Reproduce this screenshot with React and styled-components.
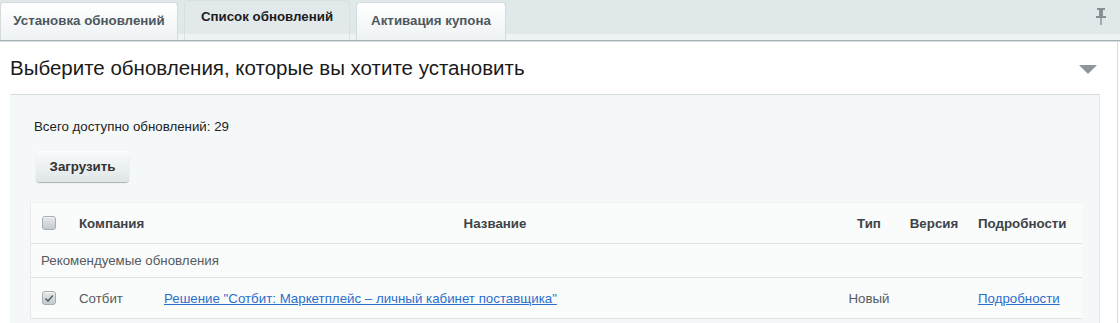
import React from 'react';
import styled, { createGlobalStyle } from 'styled-components';

const Global = createGlobalStyle`
  html, body {
    margin: 0;
    padding: 0;
    background: #fff;
    font-family: "Liberation Sans", Arial, sans-serif;
  }
`

const Page = styled.div`
  width: 1120px;
  height: 323px;
  overflow: hidden;
`

// tabs
const TabBar = styled.div`
  height: 40px;
  display: flex;
  align-items: flex-end;
  gap: 6px;
  padding-right: 14px;
  background: linear-gradient(to bottom, #e0e8ea 0, #e0e8ea 34px, #eef2f3 34px);
  border-bottom: 1px solid #a8b2b5;
  box-shadow: 0 1px 0 #d7dee0;
  box-sizing: content-box;
`
const Tab = styled.div`
  height: ${p => (p.active ? 40 : 38)}px;
  width: ${p => p.w}px;
  box-sizing: border-box;
  display: flex;
  justify-content: center;
  padding-top: ${p => (p.active ? 8 : 10)}px;
  font-size: 13.3px;
  font-weight: bold;
  color: ${p => (p.active ? '#1c1c1c' : '#4b585e')};
  border-radius: 4px 4px 0 0;
  border: 1px solid ${p => (p.active ? '#d8e0e2' : '#d4dbdd')};
  border-bottom: none;
  background: ${p => (p.active
    ? 'linear-gradient(to bottom, #e0e8ea, #e4eaec 85%, #eef2f3 85%)'
    : 'linear-gradient(to bottom, #ffffff, #f1f4f5 85%, #eef2f3)')};
`
const Spacer = styled.div`
  flex: 1;
`
const Pin = styled.svg`
  align-self: flex-start;
  margin-top: 8px;
`

// content
const Content = styled.div`
  width: 1117px;
  border-right: 1px solid #d5dcdd;
  margin-top: 1px;
  height: 300px;
`
const TitleRow = styled.div`
  height: 52px;
  display: flex;
  align-items: center;
  justify-content: space-between;
  padding: 0 20px 0 10px;
`
const Title = styled.h2`
  margin: 0;
  font-weight: normal;
  font-size: 20.5px;
  color: #1a1a1a;
`
const Arrow = styled.div`
  width: 0;
  height: 0;
  border-left: 9px solid transparent;
  border-right: 9px solid transparent;
  border-top: 9px solid #8f9699;
  margin-top: 2px;
`
const Box = styled.div`
  margin-left: 10px;
  width: 1069px;
  background: #f5f8f9;
  border-top: 1px solid #d8dee0;
  border-right: 1px solid #e3e8e9;
  padding: 24px 0 0 20px;
  height: 260px;
`
const Total = styled.div`
  font-size: 13.3px;
  color: #222;
  margin-left: 4px;
`
const Button = styled.button`
  margin: 17px 0 0 6px;
  width: 93px;
  height: 31px;
  border: none;
  border-radius: 4px;
  background: linear-gradient(to bottom, #f9fbfb, #dfe5e7);
  box-shadow: 0 1px 1px rgba(0, 0, 0, 0.3), inset 0 1px 0 #fff;
  font-family: inherit;
  font-size: 13.3px;
  font-weight: bold;
  color: #333;
`

// table
const Table = styled.div`
  margin-top: 20px;
  width: 1051px;
  background: #fafbfb;
  border-left: 1px solid #e6eaeb;
  border-top: 1px solid #eef1f2;
`
const Row = styled.div`
  display: grid;
  grid-template-columns: 37px 85px 684px 64px 66px 116px;
  height: ${p => p.h}px;
  align-items: center;
  border-bottom: 1px solid #dde3e4;
  font-size: 13.3px;
  color: ${p => (p.head ? '#3d4347' : '#555b5f')};
  font-weight: ${p => (p.head ? 'bold' : 'normal')};
`
const Cell = styled.div`
  padding-left: ${p => (p.center ? 0 : 11)}px;
  text-align: ${p => (p.center ? 'center' : 'left')};
  white-space: nowrap;
`
const GroupRow = styled.div`
  height: 33px;
  display: flex;
  align-items: center;
  padding-left: 10px;
  font-size: 13.3px;
  color: #555b5f;
  border-bottom: 1px solid #dde3e4;
`
const Link = styled.a`
  color: #2a6fcc;
  text-decoration: underline;
  cursor: pointer;
`
const Check = styled.span`
  display: flex;
  align-items: center;
  justify-content: center;
  width: 14px;
  height: 14px;
  box-sizing: border-box;
  border: 1px solid #a5adb0;
  border-radius: 3px;
  background: linear-gradient(to bottom, #e4e8e9, #c5cccf);
  box-shadow: inset 0 1px 0 rgba(255, 255, 255, 0.6);
`

const Checkbox = ({ checked }) => (
  <Check>
    {checked && (
      <svg width="10" height="9" viewBox="0 0 10 9">
        <path d="M1.5 4.5 L4 7 L8.8 1.5" fill="none" stroke="#5d6568" strokeWidth="1.6" />
      </svg>
    )}
  </Check>
)

const App = () => (
  <Page>
    <Global />
    <TabBar>
      <Tab w={178}>Установка обновлений</Tab>
      <Tab w={166} active>Список обновлений</Tab>
      <Tab w={150}>Активация купона</Tab>
      <Spacer />
      <Pin width="10" height="17" viewBox="0 0 10 17">
        <rect x="1" y="0" width="8" height="2" fill="#868f92" />
        <rect x="3" y="2" width="4" height="6" fill="#868f92" />
        <rect x="0" y="8" width="10" height="2" fill="#868f92" />
        <rect x="4.3" y="10" width="1.4" height="7" fill="#868f92" />
      </Pin>
    </TabBar>
    <Content>
      <TitleRow>
        <Title>Выберите обновления, которые вы хотите установить</Title>
        <Arrow />
      </TitleRow>
      <Box>
        <Total>Всего доступно обновлений: 29</Total>
        <Button>Загрузить</Button>
        <Table>
          <Row head h={40}>
            <Cell><Checkbox /></Cell>
            <Cell>Компания</Cell>
            <Cell center>Название</Cell>
            <Cell center>Тип</Cell>
            <Cell center>Версия</Cell>
            <Cell>Подробности</Cell>
          </Row>
          <GroupRow>Рекомендуемые обновления</GroupRow>
          <Row h={40}>
            <Cell><Checkbox checked /></Cell>
            <Cell>Сотбит</Cell>
            <Cell><Link>Решение "Сотбит: Маркетплейс – личный кабинет поставщика"</Link></Cell>
            <Cell center>Новый</Cell>
            <Cell center></Cell>
            <Cell><Link>Подробности</Link></Cell>
          </Row>
        </Table>
      </Box>
    </Content>
  </Page>
);

export default App;
